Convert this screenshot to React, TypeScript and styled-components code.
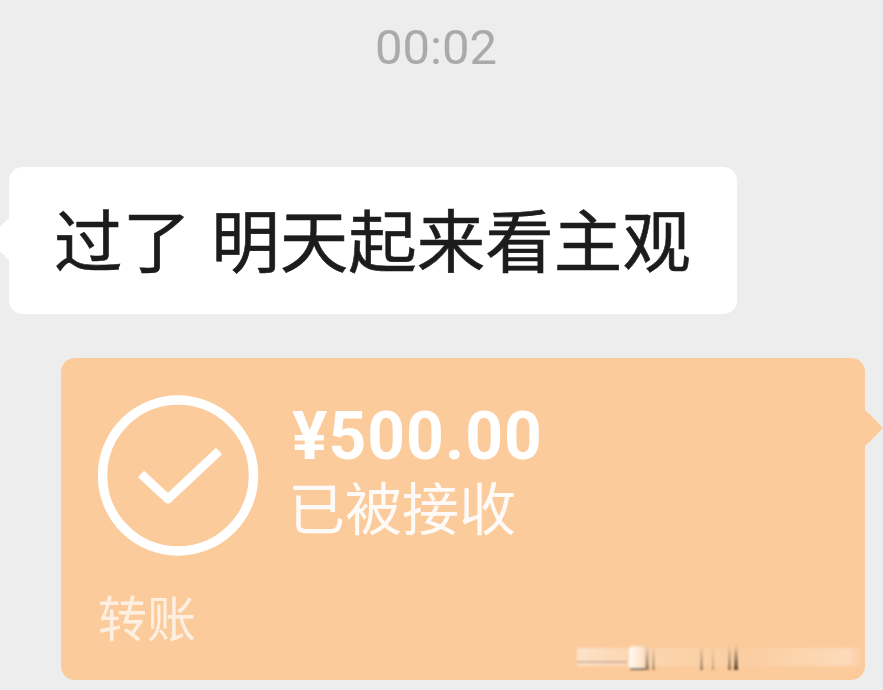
import styled, { createGlobalStyle } from "styled-components";

const GlobalStyle = createGlobalStyle`
    html, body {
        margin: 0;
        padding: 0;
        background: #ededed;
    }
    body {
        font-family: "Noto Sans CJK SC", "Noto Sans", sans-serif;
        overflow: hidden;
    }
`;

const Chat = styled.div`
    width: 883px;
    height: 690px;
    background: #ededed;
    display: flex;
    flex-direction: column;
    overflow: hidden;
`;

const TimeRow = styled.div`
    height: 167px;
    padding-top: 18px;
    box-sizing: border-box;
    text-align: center;
    padding-right: 11px;
    font-family: "Roboto", sans-serif;
    font-size: 49px;
    line-height: 60px;
    color: #aaaaaa;
`;

const Bubble = styled.div`
    position: relative;
    box-sizing: border-box;
    margin-left: 9px;
    width: 728px;
    height: 147px;
    background: #fff;
    border-radius: 14px;
    padding: 0 0 7px 45px;
    display: flex;
    align-items: center;
    font-size: 68.5px;
    -webkit-text-stroke: 0.6px #1c1c1c;
    word-spacing: 5px;
    color: #1c1c1c;
    white-space: pre;

    &::before {
        content: "";
        position: absolute;
        left: -15px;
        top: 57px;
        width: 30px;
        height: 30px;
        background: #fff;
        transform: rotate(45deg);
        border-radius: 4px;
    }
`;

const BubbleText = styled.span`
    position: relative;
`;

const Transfer = styled.div`
    position: relative;
    box-sizing: border-box;
    margin: 44px 0 0 61px;
    width: 804px;
    height: 322px;
    background: #fbcb9c;
    border-radius: 14px;
    padding: 37px 0 0 37px;
    color: #fff;

    &::after {
        content: "";
        position: absolute;
        right: -13px;
        top: 57px;
        width: 26px;
        height: 26px;
        background: #fbcb9c;
        transform: rotate(45deg);
        border-radius: 3px;
    }
`;

const TransferMain = styled.div`
    display: flex;
    align-items: flex-start;
`;

const StatusIcon = styled.svg`
    width: 161px;
    height: 161px;
    flex: none;
`;

const Amounts = styled.div`
    margin-left: 33px;
    display: flex;
    flex-direction: column;
`;

const Amount = styled.div`
    font-family: "Roboto", sans-serif;
    font-weight: 700;
    font-size: 66px;
    line-height: 70px;
    margin-top: 7px;
    letter-spacing: 1px;
`;

const Status = styled.div`
    font-size: 57px;
    line-height: 66px;
    margin-left: -4px;
    opacity: 0.92;
`;

const TransferLabel = styled.div`
    margin-top: 30px;
    font-size: 49px;
    line-height: 60px;
    opacity: 0.72;
`;

const Watermark = styled.svg`
    position: absolute;
    left: 512px;
    top: 284px;
    width: 292px;
    height: 30px;
`;

const darkBars = [
    { x: 72, w: 4, o: 0.55 },
    { x: 79, w: 3, o: 0.4 },
    { x: 127, w: 3, o: 0.5 },
    { x: 139, w: 2, o: 0.35 },
    { x: 155, w: 3, o: 0.6 },
    { x: 161, w: 4, o: 0.9 },
];

export default function App() {
    return (
        <Chat>
            <GlobalStyle />
            <TimeRow>00:02</TimeRow>
            <Bubble>
                <BubbleText>过了 明天起来看主观</BubbleText>
            </Bubble>
            <Transfer>
                <TransferMain>
                    <StatusIcon viewBox="0 0 161 161">
                        <circle cx="80" cy="80.5" r="75.5" fill="none" stroke="#fff" strokeWidth="9.5" />
                        <path d="M43 79 L70 104 L121 56" fill="none" stroke="#fff" strokeWidth="9" strokeLinejoin="round" />
                    </StatusIcon>
                    <Amounts>
                        <Amount>¥500.00</Amount>
                        <Status>已被接收</Status>
                    </Amounts>
                </TransferMain>
                <TransferLabel>转账</TransferLabel>
                <Watermark viewBox="0 0 292 30">
                    <defs>
                        <linearGradient id="fade" x1="0" x2="1" y1="0" y2="0">
                            <stop offset="0" stopColor="#fff" stopOpacity="0.45" />
                            <stop offset="0.2" stopColor="#fff" stopOpacity="0.2" />
                            <stop offset="0.6" stopColor="#fff" stopOpacity="0.05" />
                            <stop offset="0.95" stopColor="#fff" stopOpacity="0.3" />
                            <stop offset="1" stopColor="#fff" stopOpacity="0" />
                        </linearGradient>
                        <linearGradient id="barFade" x1="0" x2="0" y1="0" y2="1">
                            <stop offset="0" stopColor="#4b3420" stopOpacity="0" />
                            <stop offset="1" stopColor="#4b3420" stopOpacity="1" />
                        </linearGradient>
                        <linearGradient id="blobFade" x1="0" x2="1" y1="0" y2="0">
                            <stop offset="0" stopColor="#fff" stopOpacity="0.85" />
                            <stop offset="1" stopColor="#fff" stopOpacity="0.15" />
                        </linearGradient>
                        <filter id="soft">
                            <feGaussianBlur stdDeviation="0.9" />
                        </filter>
                    </defs>
                    <g filter="url(#soft)">
                        <rect x="4" y="6" width="286" height="18" fill="url(#fade)" />
                        <rect x="4" y="19" width="50" height="2" fill="#a98c72" opacity="0.55" />
                        <rect x="56" y="4" width="18" height="24" rx="4" fill="url(#blobFade)" />
                        <rect x="57" y="26" width="15" height="2" fill="#5a4a3c" opacity="0.8" />
                        {darkBars.map((bar) => (
                            <rect key={bar.x} x={bar.x} y="3" width={bar.w} height="25" fill="url(#barFade)" opacity={bar.o} />
                        ))}
                    </g>
                </Watermark>
            </Transfer>
        </Chat>
    );
}
